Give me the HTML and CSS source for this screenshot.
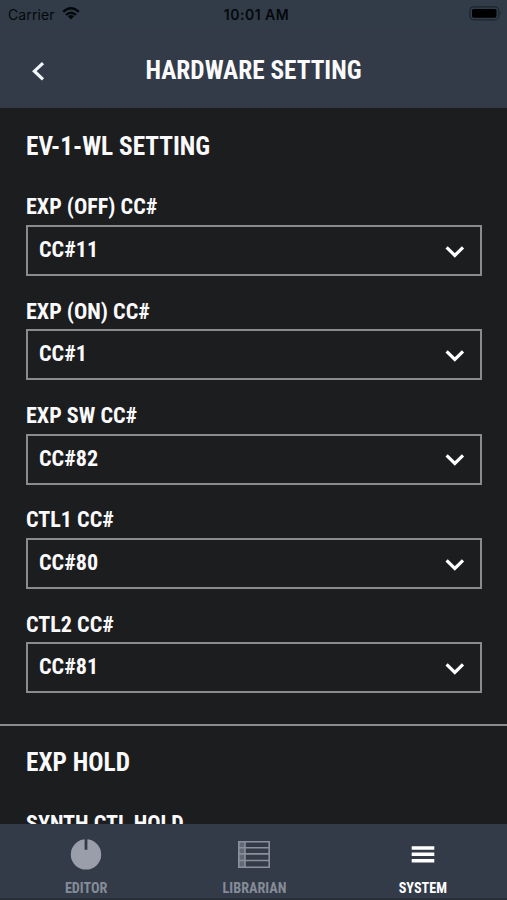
FILE: index.html
```
<!DOCTYPE html>
<html lang="en">
<head>
<meta charset="utf-8">
<title>Hardware Setting</title>
<link rel="stylesheet" href="styles.css">
</head>
<body>
<div class="app">
  <div class="status">
    <div class="carrier"><span>Carrier</span>
      <svg width="18" height="13" viewBox="0 0 18 13"><g fill="none" stroke="#05080b" stroke-width="2.3"><path d="M1.2 4.8Q9-2.2 16.8 4.8"/><path d="M4 7.9Q9 3.5 14 7.9"/></g><path d="M5.9 9.3Q9 6.9 12.1 9.3L9 12.4Z" fill="#05080b"/></svg>
    </div>
    <div class="clock">10:01 AM</div>
    <svg class="battery" width="34" height="15" viewBox="0 0 34 15"><rect x=".8" y=".8" width="29" height="13" rx="3.8" fill="none" stroke="#1d252d" stroke-width="1.2"/><rect x="3" y="3" width="24.5" height="8.7" rx="1.6" fill="#000"/><path d="M31.5 5.3q1.7 2 0 4z" fill="#1d252d"/></svg>
  </div>
  <header class="header">
    <svg class="back" width="14" height="20" viewBox="0 0 14 20"><path d="M12 2.1L3.4 10.2l8.6 8.1" fill="none" stroke="#f2f5fb" stroke-width="3.2"/></svg>
    <h1 class="title">HARDWARE SETTING</h1>
  </header>
  <main class="content">
    <section class="section">
      <h2>EV-1-WL SETTING</h2>
      <div class="field"><label>EXP (OFF) CC#</label><div class="select"><span>CC#11</span><svg class="chev" width="20" height="14" viewBox="0 0 20 14"><path d="M1.6 2.4l8.2 8 8.2-8"/></svg></div></div>
      <div class="field"><label>EXP (ON) CC#</label><div class="select"><span>CC#1</span><svg class="chev" width="20" height="14" viewBox="0 0 20 14"><path d="M1.6 2.4l8.2 8 8.2-8"/></svg></div></div>
      <div class="field"><label>EXP SW CC#</label><div class="select"><span>CC#82</span><svg class="chev" width="20" height="14" viewBox="0 0 20 14"><path d="M1.6 2.4l8.2 8 8.2-8"/></svg></div></div>
      <div class="field"><label>CTL1 CC#</label><div class="select"><span>CC#80</span><svg class="chev" width="20" height="14" viewBox="0 0 20 14"><path d="M1.6 2.4l8.2 8 8.2-8"/></svg></div></div>
      <div class="field"><label>CTL2 CC#</label><div class="select"><span>CC#81</span><svg class="chev" width="20" height="14" viewBox="0 0 20 14"><path d="M1.6 2.4l8.2 8 8.2-8"/></svg></div></div>
    </section>
    <section class="section hold">
      <h2>EXP HOLD</h2>
      <div class="field"><label>SYNTH CTL HOLD</label></div>
    </section>
  </main>
  <nav class="tabs">
    <div class="tab">
      <svg width="32" height="32" viewBox="0 0 32 32"><circle cx="16" cy="16.4" r="15.2" fill="#999eaa"/><path d="M14.6 0h2.8v11.8h-2.8z" fill="#323b47"/></svg>
      <span>EDITOR</span>
    </div>
    <div class="tab">
      <svg width="32" height="32" viewBox="0 0 32 32"><path d="M0 3.5h7v26H0z" fill="#626974"/><path d="M.8 3.8h30.4v25.4H.8zM7 3.5v26M.8 9.7h30.4M.8 15.9h30.4M.8 22.5h30.4" fill="none" stroke="#8b919c" stroke-width="1.6"/></svg>
      <span>LIBRARIAN</span>
    </div>
    <div class="tab active">
      <svg width="32" height="32" viewBox="0 0 32 32"><path d="M4.7 8.2h22.6v3.5H4.7zM4.7 14.6h22.6v3.5H4.7zM4.7 21.1h22.6v3.5H4.7z" fill="#fff"/></svg>
      <span>SYSTEM</span>
    </div>
  </nav>
</div>
</body>
</html>
```
FILE: styles.css
```
* { box-sizing: border-box; }
body { margin: 0; background: #1c1d1f; }
.app {
  width: 507px; height: 900px; overflow: hidden;
  display: flex; flex-direction: column;
  background: #1c1d1f; color: #fafafc;
  font-family: "Roboto Condensed", Roboto, sans-serif;
  font-stretch: 75%; font-weight: 700;
}
h1, h2 { margin: 0; font-size: 25.3px; line-height: 30px; font-weight: 700; }
svg { display: block; flex: none; }
.status {
  flex: none; height: 28px; padding: 0 4px 0 8px;
  display: grid; grid-template-columns: 1fr auto 1fr; align-items: center;
  background: #313c48; color: #05080b;
  font: 400 14px/27px Inter, sans-serif;
}
.carrier { display: flex; align-items: center; gap: 7px; letter-spacing: .1px; }
.carrier svg { margin-top: -2px; }
.clock { font-weight: 600; letter-spacing: .5px; padding-left: 2px; }
.battery { justify-self: end; margin-top: -2px; }
.header {
  flex: none; height: 80px; padding: 5px 31px 0;
  display: grid; grid-template-columns: 14px 1fr 14px; align-items: center;
  background: #323b47;
}
.title { text-align: center; }
.content { flex: 1; min-height: 0; overflow: hidden; }
.section { padding: 23.5px 25px 0 26px; }
.section h2 { margin-bottom: 30.5px; }
.field { height: 104.3px; }
.field label { display: block; font-size: 22.1px; line-height: 28px; padding: .4px 0 4.8px; }
.select {
  height: 51px; border: 2px solid #8b8b8d; padding: 0 15px 3px 11px;
  display: flex; align-items: center; justify-content: space-between;
  font-size: 22.1px; line-height: 28px;
}
.chev { margin-top: 5px; }
.chev path { fill: none; stroke: #fff; stroke-width: 3.2; }
.hold { border-top: 2px solid #8b8b8d; margin-top: 10.7px; padding-top: 22px; }
.hold h2 { margin-bottom: 30px; }
.tabs {
  flex: none; height: 76px; padding: 14px 0 0 2px;
  display: grid; grid-template-columns: repeat(3, 1fr);
  background: #323b47; border-bottom: 2px solid #292d35;
}
.tab { display: flex; flex-direction: column; align-items: center; color: #858c98; font-size: 14.2px; line-height: 18px; gap: 9px; }
.active { color: #fff; }
```
